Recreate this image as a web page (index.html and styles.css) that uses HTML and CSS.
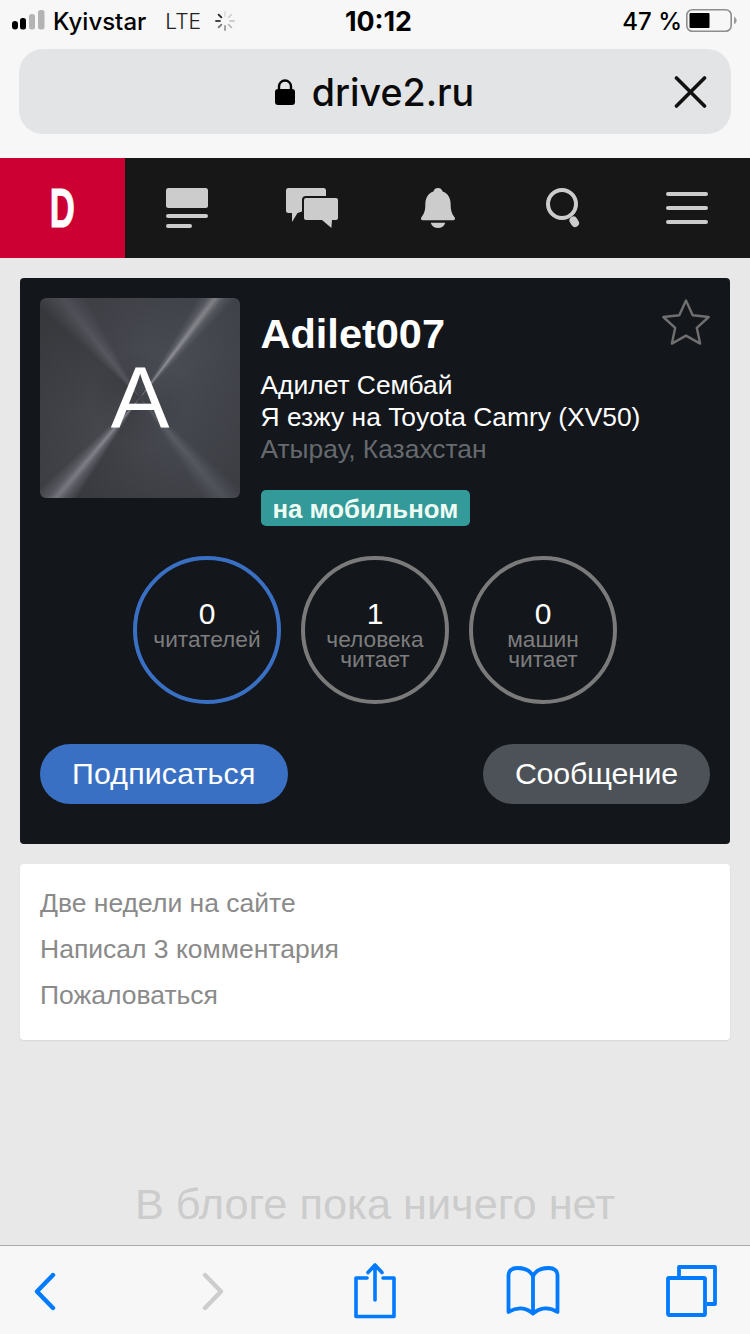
FILE: index.html
```html
<!DOCTYPE html>
<html lang="ru">
<head>
<meta charset="utf-8">
<title>Adilet007</title>
<link rel="stylesheet" href="styles.css">
</head>
<body>
<div class="page">
  <header class="chrome">
    <div class="status">
      <div class="status-left">
        <svg class="signal" width="33" height="24" viewBox="0 0 33 24"><rect x="0" y="12" width="6" height="8.500" rx="3" fill="#000"/><rect x="8" y="9" width="6" height="11.500" rx="2.500" fill="#000"/><rect x="17" y="5" width="6" height="15.500" rx="2.500" fill="#b4b4b4"/><rect x="26" y="1" width="6.500" height="19.500" rx="2.500" fill="#b4b4b4"/></svg>
        <span class="carrier">Kyivstar</span>
        <span class="lte">LTE</span>
        <svg class="spinner" width="20" height="20" viewBox="0 0 20 20" fill="none" stroke-width="1.800" stroke-linecap="round"><path d="M10 1v4" stroke="#ddd"/><path d="M16.400 3.600l-2.800 2.800" stroke="#d4d4d4"/><path d="M19 10h-4" stroke="#ccc"/><path d="M16.400 16.400l-2.800-2.800" stroke="#bbb"/><path d="M10 19v-4" stroke="#999"/><path d="M3.600 16.400l2.800-2.800" stroke="#777"/><path d="M1 10h4" stroke="#444"/><path d="M3.600 3.600l2.800 2.800" stroke="#222"/></svg>
      </div>
      <div class="clock">10:12</div>
      <div class="status-right">
        <span class="percent">47 %</span>
        <svg class="battery" width="54" height="26" viewBox="0 0 54 26"><rect x="1.800" y="1.800" width="44.400" height="21.400" rx="5.500" fill="none" stroke="#8e8e8e" stroke-width="1.600"/><rect x="4.500" y="5" width="20" height="15" rx="1" fill="#000"/><path d="M49 9c2 .6 2.600 2.200 2.600 3.500s-.6 2.900-2.600 3.500z" fill="#9a9a9a"/></svg>
      </div>
    </div>
    <div class="urlbar">
      <div class="url">
        <svg class="lock" width="22" height="28" viewBox="0 0 22 28"><path d="M5 13V8.500a6 6 0 0 1 12 0V13" fill="none" stroke="#000" stroke-width="2.400"/><rect x="1" y="11" width="20" height="16" rx="3" fill="#000"/></svg>
        <span>drive2.ru</span>
      </div>
      <svg class="close" width="34" height="34" viewBox="0 0 34 34"><path d="M2.500 3l28 28M30.500 3l-28 28" stroke="#111" stroke-width="3.600" stroke-linecap="round"/></svg>
    </div>
  </header>

  <nav class="nav">
    <div class="logo"><span class="logo-d">D</span></div>
    <div class="nav-item">
      <svg width="42" height="40" viewBox="0 0 42 40" fill="#ccc"><rect x="0" y="0" width="42" height="20" rx="2.500"/><rect x="0" y="26" width="42" height="4" rx="2"/><rect x="0" y="36" width="26" height="4" rx="2"/></svg>
    </div>
    <div class="nav-item">
      <svg width="52" height="40" viewBox="0 0 52 40" fill="#ccc"><path d="M2.500 0h35A2.500 2.500 0 0 1 40 2.500V8H20a4 4 0 0 0-4 4v11.500l-4.500 1.500L6 34v-9H2.500A2.500 2.500 0 0 1 0 22.500v-20A2.500 2.500 0 0 1 2.500 0z"/><path d="M20 10h30a2 2 0 0 1 2 2v18a2 2 0 0 1-2 2h-4l-.6 8L36 32H20a2 2 0 0 1-2-2V12a2 2 0 0 1 2-2z"/></svg>
    </div>
    <div class="nav-item nav-item-bell">
      <svg width="36" height="40" viewBox="0 0 36 41" fill="#ccc"><path d="M18 0c2.600 0 4.300 1.800 4.700 3.500C28.500 5.500 31 10.500 31 17c0 7 1.600 10 4 13 .9 1.200.4 3-1.400 3H2.400C.6 33 .1 31.200 1 30c2.400-3 4-6 4-13 0-6.500 2.500-11.500 8.300-13.500C13.700 1.800 15.400 0 18 0z"/><path d="M10.500 35.500h15c-1 3.500-4 5.500-7.500 5.500s-6.500-2-7.500-5.500z"/></svg>
    </div>
    <div class="nav-item">
      <svg width="36" height="40" viewBox="0 0 36 40" fill="none"><circle cx="18" cy="16" r="14" stroke="#ccc" stroke-width="4"/><path d="M29.500 32.500l1.500 2.500" stroke="#ccc" stroke-width="8" stroke-linecap="round"/></svg>
    </div>
    <div class="nav-item">
      <svg width="42" height="32" viewBox="0 0 42 32" fill="#ccc"><rect y="0" width="42" height="4" rx="2"/><rect y="14" width="42" height="4" rx="2"/><rect y="28" width="42" height="4" rx="2"/></svg>
    </div>
  </nav>

  <main class="content">
    <section class="profile">
      <div class="profile-head">
        <div class="avatar">A</div>
        <div class="info">
          <h1 class="name">Adilet007</h1>
          <div class="line">Адилет Сембай</div>
          <div class="line">Я езжу на Toyota Camry (XV50)</div>
          <div class="line muted">Атырау, Казахстан</div>
          <div class="badge">на мобильном</div>
        </div>
        <svg class="star" width="50" height="48" viewBox="0 0 50 48"><path d="M25 2.500l6.700 14.700 16 1.800-11.900 10.800 3.300 15.800L25 37.600l-14.100 8 3.300-15.800L2.300 19l16-1.800z" fill="none" stroke="#6f6f6f" stroke-width="2.400" stroke-linejoin="round"/></svg>
      </div>
      <div class="stats">
        <div class="stat stat-blue"><div class="num">0</div><div class="label">читателей</div></div>
        <div class="stat"><div class="num">1</div><div class="label">человека<br>читает</div></div>
        <div class="stat"><div class="num">0</div><div class="label">машин<br>читает</div></div>
      </div>
      <div class="actions">
        <a class="btn btn-blue">Подписаться</a>
        <a class="btn btn-gray">Сообщение</a>
      </div>
    </section>

    <section class="facts">
      <div class="fact">Две недели на сайте</div>
      <div class="fact">Написал 3 комментария</div>
      <div class="fact">Пожаловаться</div>
    </section>

    <div class="empty">В блоге пока ничего нет</div>
  </main>

  <footer class="toolbar">
    <svg class="tool tool-back" width="26" height="40" viewBox="0 0 26 40" fill="none" stroke="#007aff" stroke-width="4.400" stroke-linecap="round" stroke-linejoin="round"><path d="M20 3L4 19.500 20 36"/></svg>
    <svg class="tool tool-forward" width="26" height="40" viewBox="0 0 26 40" fill="none" stroke="#cdcdcd" stroke-width="4.400" stroke-linecap="round" stroke-linejoin="round"><path d="M6 3l16 16.500L6 36"/></svg>
    <svg class="tool tool-share" width="42" height="56" viewBox="0 0 42 56" fill="none" stroke="#007aff" stroke-width="3.600" stroke-linecap="round" stroke-linejoin="round"><path d="M13 15H2v38.500h38V15H29"/><path d="M21 37V3M14 9.500l7-7.500 7 7.500"/></svg>
    <svg class="tool tool-book" width="54" height="50" viewBox="0 0 54 50" fill="none" stroke="#007aff" stroke-width="3.800" stroke-linecap="round" stroke-linejoin="round"><path d="M27 10C24 4 18 2 11 2 6 2 2.500 5 2.500 9v37c8-5 17-5 24.500 1.500C34.500 41 43.500 41 51.500 46V9c0-4-3.500-7-8.500-7-7 0-13 2-16 8z"/><path d="M27 10v37"/></svg>
    <svg class="tool tool-tabs" width="52" height="52" viewBox="0 0 52 52" fill="none" stroke="#007aff" stroke-width="3.800" stroke-linejoin="round"><path d="M13 11V2h36v37h-8"/><rect x="2" y="13" width="37" height="37" rx="1"/></svg>
  </footer>
</div>
</body>
</html>
```

FILE: styles.css
```css
* { box-sizing: border-box; margin: 0; padding: 0; }
html, body { width: 750px; height: 1334px; overflow: hidden; }
body { font-family: "Liberation Sans", Arial, sans-serif; background: #e8e8e8; color: #000; }

.page { display: flex; flex-direction: column; height: 1334px; }

.chrome { flex: none; height: 158px; background: #f7f7f7; font-family: Inter, "Liberation Sans", sans-serif; }
.status { display: grid; grid-template-columns: 1fr auto 1fr; align-items: center; height: 42px; padding: 0 11px 0 12px; }
.status-left { display: flex; align-items: center; }
.signal { margin-right: 8px; }
.carrier { font-size: 24px; font-weight: 500; margin-right: 19px; }
.lte { font-size: 21px; color: #222; margin-right: 14px; font-weight: 300; }
.clock { font-size: 26.800px; font-weight: 700; margin-left: 6px; }
.status-right { display: flex; align-items: center; justify-content: flex-end; gap: 3px; }
.percent { font-size: 24px; font-weight: 500; }

.urlbar { position: relative; display: flex; align-items: center; justify-content: center; height: 85px; margin: 7px 19px 0; background: #e3e4e6; border-radius: 24px; }
.url { display: flex; align-items: center; gap: 16px; padding: 1px 2px 0 0; font-size: 37.600px; font-weight: 500; color: #0a0a0a; }
.close { position: absolute; right: 23px; top: 26px; }

.nav { flex: none; display: flex; height: 100px; background: #171717; }
.logo { width: 125px; background: #cc0033; color: #fff; display: flex; align-items: center; justify-content: center; }
.logo-d { display: block; font-size: 56px; font-weight: 700; line-height: 56px; transform: scaleX(.62); -webkit-text-stroke: 1px #fff; }
.nav-item { width: 125px; padding-right: 1px; display: flex; align-items: center; justify-content: center; }
.nav-item-bell { padding: 0 0 0 1px; }

.content { flex: 1; min-height: 0; padding: 20px 20px 0; }
.profile { height: 566px; padding: 20px; background: #13161b; border-radius: 4px; color: #fff; display: flex; flex-direction: column; }
.profile-head { position: relative; display: flex; gap: 20.500px; height: 228px; }
.avatar { flex: none; width: 200px; height: 200px; border-radius: 6px; display: flex; align-items: center; justify-content: center; font-size: 88px; color: #fff;
  background:
    radial-gradient(circle at 50% 50%, rgba(0,0,0,.06) 0, rgba(0,0,0,0) 35%, rgba(0,0,0,.14) 100%),
    conic-gradient(from 0deg at 50% 50%, #46484f 0deg, #484a52 30deg, #5e6068 34deg, #8f9096 37deg, #5e6068 40deg, #4a4c54 44deg, #45474e 90deg, #44464d 132deg, #5a5c65 140deg, #46484f 148deg, #3f4046 212deg, #62636b 217deg, #85868e 220deg, #62636b 223deg, #45474d 228deg, #3e3f44 312deg, #575860 322deg, #44454c 332deg, #46484f 360deg);
}
.info { flex: 1; min-width: 0; }
.name { font-size: 41.500px; line-height: 42px; font-weight: 700; margin: 15px 0 14px; }
.line { font-size: 26.400px; line-height: 32px; }
.muted { color: #666a6e; }
.badge { display: inline-block; height: 36px; margin-top: 25px; padding: 0 12px; border-radius: 5px; background: #339999; color: #eefcf4; font-size: 25.800px; font-weight: 700; line-height: 38px; }
.star { position: absolute; right: -1px; top: 0; }

.stats { display: flex; justify-content: center; gap: 20px; margin-top: 30px; }
.stat { width: 148px; height: 148px; border-radius: 50%; border: 4px solid #7a7a7a; padding-top: 39px; text-align: center; }
.stat-blue { border-color: #3a70c4; }
.num { font-size: 30px; line-height: 30px; color: #fff; }
.label { font-size: 22.700px; line-height: 20px; color: #7d7d7d; }

.actions { display: flex; justify-content: space-between; margin-top: 40px; }
.btn { height: 60px; padding: 0 32px; border-radius: 30px; font-size: 30.300px; line-height: 60px; color: #fff; }
.btn-blue { background: #3a70c4; letter-spacing: .18px; }
.btn-gray { background: #4c5258; letter-spacing: -.2px; }

.facts { height: 176px; margin-top: 20px; padding-top: 16px; background: #fff; border-radius: 4px; box-shadow: 0 1px 2px rgba(0,0,0,.08); }
.fact { height: 46px; padding-left: 20px; font-size: 26.500px; line-height: 46px; color: #8a8a8a; }

.empty { margin-top: 139px; text-align: center; font-size: 43.300px; line-height: 50px; color: #cccccc; white-space: nowrap; }

.toolbar { flex: none; height: 89px; display: flex; align-items: flex-start; background: #f7f7f7; border-top: 1px solid #aaa; }
.tool { flex: none; }
.tool-back { margin: 26px 0 0 33px; }
.tool-forward { margin: 26px 0 0 140px; }
.tool-share { margin: 17px 0 0 129px; }
.tool-book { margin: 20px 0 0 110px; }
.tool-tabs { margin: 19px 0 0 106px; }
```
